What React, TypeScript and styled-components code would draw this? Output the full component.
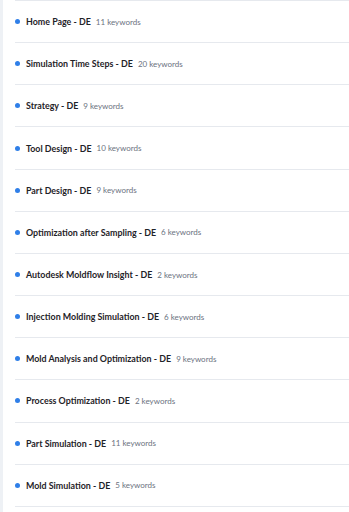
import React from "react";
import styled, { createGlobalStyle } from "styled-components";

const Global = createGlobalStyle`
  html, body { margin: 0; padding: 0; background: #ffffff; }
  body { font-family: Lato, "Open Sans", sans-serif; }
`;

const Page = styled.div`
  display: flex;
  width: 349px;
  height: 512px;
  overflow: hidden;
  background: #ffffff;
`;

const Rail = styled.div`
  width: 3px;
  flex: none;
  background: #eef1f5;
`;

const List = styled.ul`
  list-style: none;
  margin: 0;
  padding: 0 0 0 12px;
  flex: 1;
`;

const Row = styled.li`
  display: flex;
  align-items: center;
  height: 41.17px;
  border-top: 1px solid #e6e9ee;
`;

const Dot = styled.span`
  width: 5px;
  height: 5px;
  border-radius: 50%;
  background: #2f7fe8;
  flex: none;
  margin-right: 6px;
`;

const Title = styled.span`
  font-size: 8.9px;
  font-weight: 700;
  color: #1f2328;
`;

const Count = styled.span`
  font-size: 8px;
  color: #6b7280;
  margin-left: 5px;
`;

const items: [string, number][] = [
  ["Home Page", 11],
  ["Simulation Time Steps", 20],
  ["Strategy", 9],
  ["Tool Design", 10],
  ["Part Design", 9],
  ["Optimization after Sampling", 6],
  ["Autodesk Moldflow Insight", 2],
  ["Injection Molding Simulation", 6],
  ["Mold Analysis and Optimization", 9],
  ["Process Optimization", 2],
  ["Part Simulation", 11],
  ["Mold Simulation", 5],
];

export default function App() {
  return (
    <>
      <Global />
      <Page>
        <Rail />
        <List>
          {items.map(([name, n]) => (
            <Row key={name}>
              <Dot />
              <Title>{name} - DE</Title>
              <Count>{n} keywords</Count>
            </Row>
          ))}
          <Row />
        </List>
      </Page>
    </>
  );
}
